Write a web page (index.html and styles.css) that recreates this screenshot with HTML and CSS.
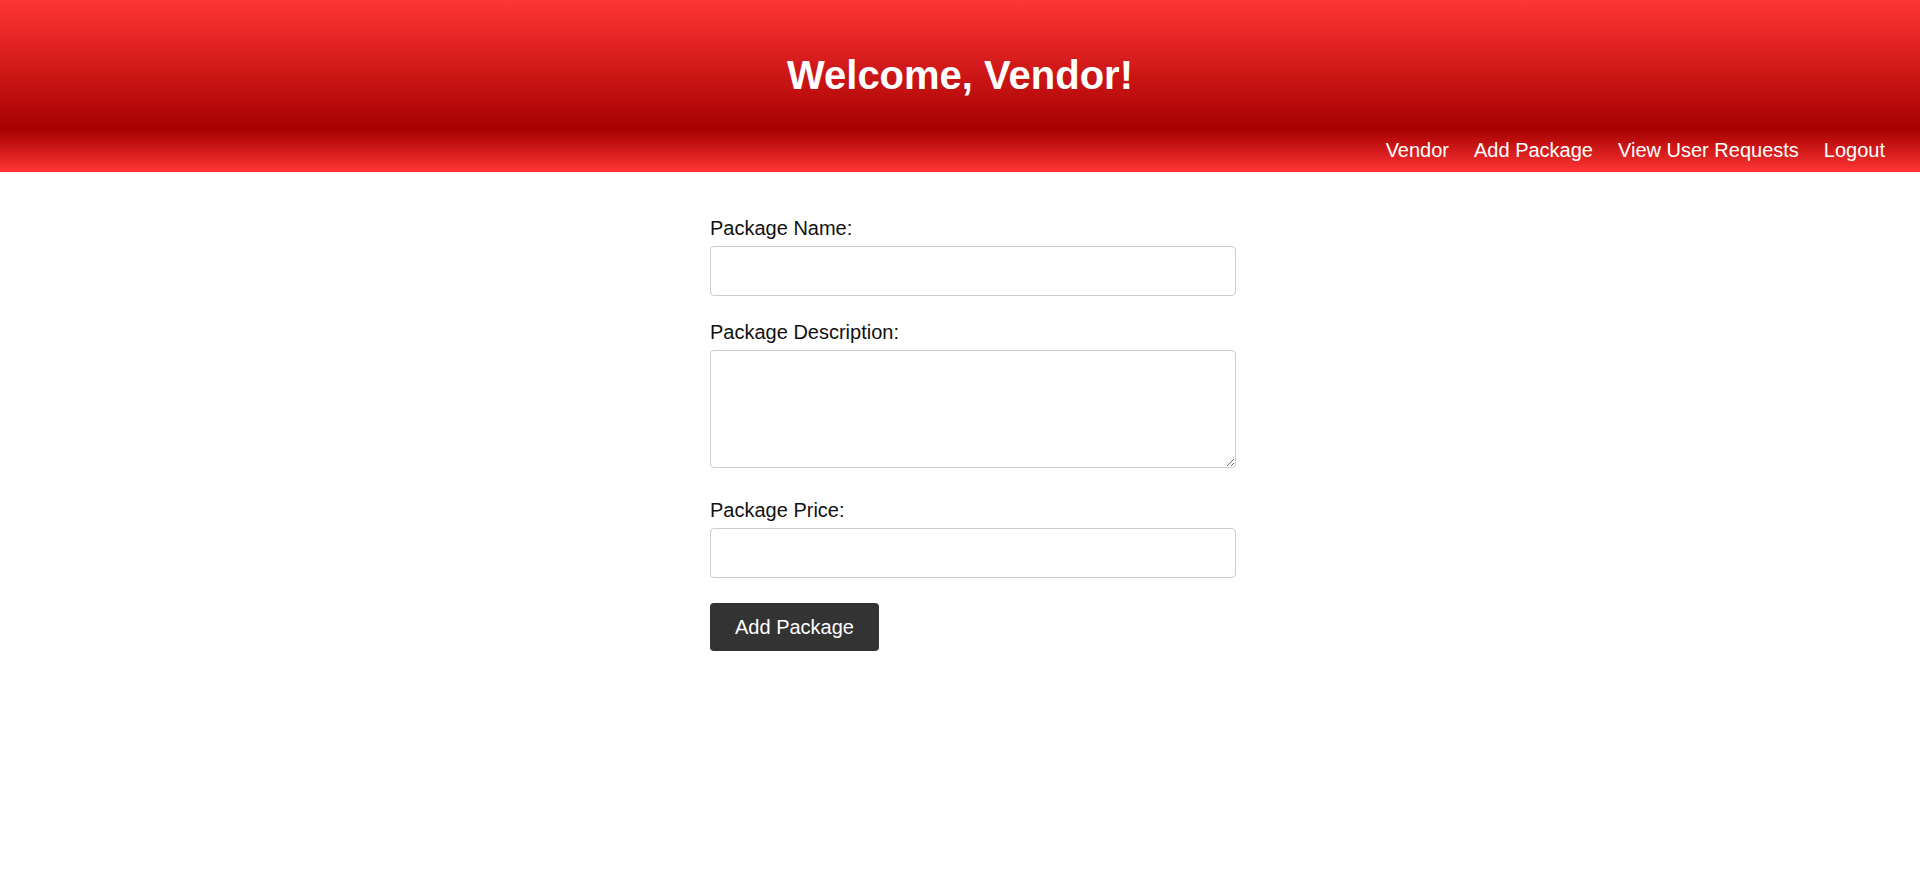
FILE: index.html
```html
<!DOCTYPE html>
<html lang="en">
<head>
<meta charset="utf-8">
<title>Vendor Dashboard</title>
<link rel="stylesheet" href="styles.css">
</head>
<body>
<header class="site-header">
  <h1 class="site-title">Welcome, Vendor!</h1>
</header>
<nav class="site-nav">
  <a href="#" class="nav-link">Vendor</a>
  <a href="#" class="nav-link">Add Package</a>
  <a href="#" class="nav-link">View User Requests</a>
  <a href="#" class="nav-link">Logout</a>
</nav>
<main class="content">
  <form class="package-form">
    <label class="field-label" for="name">Package Name:</label>
    <input class="field-input" type="text" id="name">
    <label class="field-label" for="desc">Package Description:</label>
    <textarea class="field-input field-textarea" id="desc"></textarea>
    <label class="field-label" for="price">Package Price:</label>
    <input class="field-input field-last" type="text" id="price">
    <button type="button" class="submit-btn">Add Package</button>
  </form>
</main>
</body>
</html>
```
FILE: styles.css
```css
* {
  margin: 0;
  padding: 0;
}

body {
  font-family: "Liberation Sans", Arial, sans-serif;
  background: #ffffff;
  color: #111111;
}

.site-header {
  background: linear-gradient(to bottom, #ff3535, #a80000);
  padding: 52px 20px 31px;
  text-align: center;
}

.site-title {
  font-size: 40px;
  font-weight: bold;
  color: #ffffff;
  line-height: 46px;
}

.site-nav {
  background: linear-gradient(to bottom, #a60000, #ff3535);
  display: flex;
  justify-content: flex-end;
  gap: 25px;
  padding: 10px 35px;
  height: 23px;
}

.nav-link {
  color: #ffffff;
  text-decoration: none;
  font-size: 20px;
  line-height: 23px;
}

.content {
  padding-top: 45px;
}

.package-form {
  width: 500px;
  margin: 0 auto;
}

.field-label {
  display: block;
  font-size: 20px;
  line-height: 23px;
  margin-bottom: 6px;
}

.field-input {
  display: block;
  width: 100%;
  height: 24px;
  padding: 12px;
  border: 1px solid #cccccc;
  border-radius: 4px;
  font-family: "Liberation Sans", Arial, sans-serif;
  font-size: 20px;
  margin-bottom: 25px;
  background: #ffffff;
}

.field-textarea {
  height: 92px;
  margin-bottom: 31px;
  resize: vertical;
}

.field-last {
  margin-bottom: 25px;
}

.submit-btn {
  display: block;
  background: #333333;
  color: #ffffff;
  border: none;
  border-radius: 4px;
  padding: 12px 25px;
  font-family: "Liberation Sans", Arial, sans-serif;
  font-size: 20px;
  line-height: 24px;
  cursor: pointer;
}
```
